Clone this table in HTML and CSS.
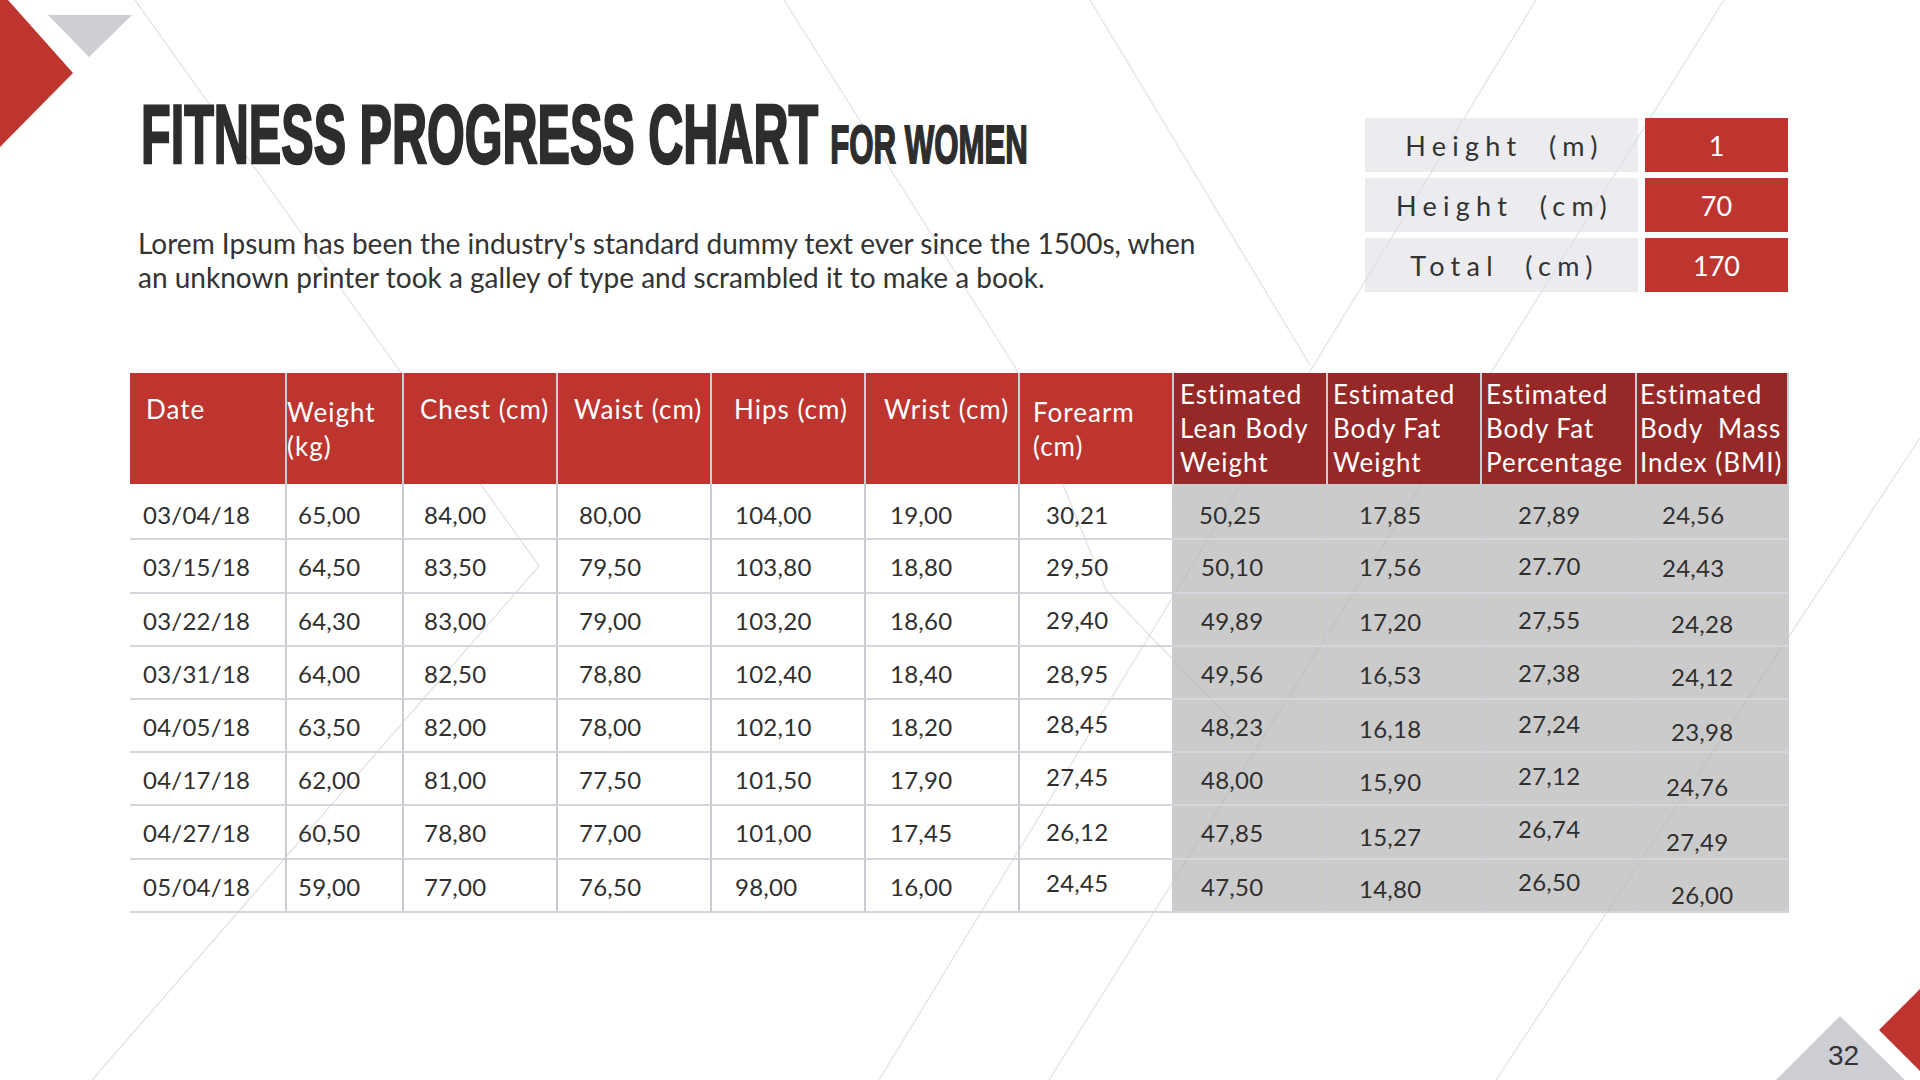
FILE: index.html
```html
<!DOCTYPE html>
<html lang="en">
<head>
<meta charset="utf-8">
<title>Fitness Progress Chart for Women</title>
<link rel="stylesheet" href="styles.css">
</head>
<body>
<div class="slide">
  <svg class="deco" width="1920" height="1080" viewBox="0 0 1920 1080" aria-hidden="true">
    <g class="bg-lines">
      <polyline points="135,0 539,566 92,1080"/>
      <polyline points="784,0 1015,367 1106,590 1253,743"/>
      <line x1="1090" y1="0" x2="1310" y2="365"/>
      <line x1="1536" y1="0" x2="879" y2="1080"/>
      <line x1="1724" y1="0" x2="1049" y2="1080"/>
      <line x1="1920" y1="438" x2="1496" y2="1080"/>
    </g>
    <polygon class="red" points="0,0 8,0 73,73 0,147"/>
    <polygon class="grey" points="48,15 132,15 89,57"/>
    <polygon class="grey" points="1776,1080 1840,1016 1905,1080"/>
    <polygon class="red" points="1920,989 1879,1030 1920,1071"/>
  </svg>
  <div class="page-num">32</div>

  <header class="top">
    <div class="intro">
      <h1 class="title">FITNESS PROGRESS CHART<span class="title-sub">FOR WOMEN</span></h1>
      <p class="lead">Lorem Ipsum has been the industry's standard dummy text ever since the 1500s, when<br>an unknown printer took a galley of type and scrambled it to make a book.</p>
    </div>
    <div class="stats">
      <div class="stat-label">Height  (m)</div><div class="stat-value">1</div>
      <div class="stat-label">Height  (cm)</div><div class="stat-value">70</div>
      <div class="stat-label">Total  (cm)</div><div class="stat-value">170</div>
    </div>
  </header>

  <div class="chart">
    <div class="row head">
      <div class="cell h1l">Date</div>
      <div class="cell h2l">Weight<br>(kg)</div>
      <div class="cell h1l">Chest (cm)</div>
      <div class="cell h1l">Waist (cm)</div>
      <div class="cell h1l">Hips (cm)</div>
      <div class="cell h1l">Wrist (cm)</div>
      <div class="cell h2l">Forearm<br>(cm)</div>
      <div class="cell h3l est">Estimated<br>Lean Body<br>Weight</div>
      <div class="cell h3l est">Estimated<br>Body Fat<br>Weight</div>
      <div class="cell h3l est">Estimated<br>Body Fat<br>Percentage</div>
      <div class="cell h3l est">Estimated<br>Body&nbsp; Mass<br>Index (BMI)</div>
    </div>
    <div class="row">
      <div class="cell">03/04/18</div><div class="cell">65,00</div><div class="cell">84,00</div><div class="cell">80,00</div><div class="cell">104,00</div><div class="cell">19,00</div><div class="cell">30,21</div><div class="cell est">50,25</div><div class="cell est">17,85</div><div class="cell est">27,89</div><div class="cell est">24,56</div>
    </div>
    <div class="row">
      <div class="cell">03/15/18</div><div class="cell">64,50</div><div class="cell">83,50</div><div class="cell">79,50</div><div class="cell">103,80</div><div class="cell">18,80</div><div class="cell">29,50</div><div class="cell est">50,10</div><div class="cell est">17,56</div><div class="cell est">27.70</div><div class="cell est">24,43</div>
    </div>
    <div class="row">
      <div class="cell">03/22/18</div><div class="cell">64,30</div><div class="cell">83,00</div><div class="cell">79,00</div><div class="cell">103,20</div><div class="cell">18,60</div><div class="cell">29,40</div><div class="cell est">49,89</div><div class="cell est">17,20</div><div class="cell est">27,55</div><div class="cell est">24,28</div>
    </div>
    <div class="row">
      <div class="cell">03/31/18</div><div class="cell">64,00</div><div class="cell">82,50</div><div class="cell">78,80</div><div class="cell">102,40</div><div class="cell">18,40</div><div class="cell">28,95</div><div class="cell est">49,56</div><div class="cell est">16,53</div><div class="cell est">27,38</div><div class="cell est">24,12</div>
    </div>
    <div class="row">
      <div class="cell">04/05/18</div><div class="cell">63,50</div><div class="cell">82,00</div><div class="cell">78,00</div><div class="cell">102,10</div><div class="cell">18,20</div><div class="cell">28,45</div><div class="cell est">48,23</div><div class="cell est">16,18</div><div class="cell est">27,24</div><div class="cell est">23,98</div>
    </div>
    <div class="row">
      <div class="cell">04/17/18</div><div class="cell">62,00</div><div class="cell">81,00</div><div class="cell">77,50</div><div class="cell">101,50</div><div class="cell">17,90</div><div class="cell">27,45</div><div class="cell est">48,00</div><div class="cell est">15,90</div><div class="cell est">27,12</div><div class="cell est">24,76</div>
    </div>
    <div class="row">
      <div class="cell">04/27/18</div><div class="cell">60,50</div><div class="cell">78,80</div><div class="cell">77,00</div><div class="cell">101,00</div><div class="cell">17,45</div><div class="cell">26,12</div><div class="cell est">47,85</div><div class="cell est">15,27</div><div class="cell est">26,74</div><div class="cell est">27,49</div>
    </div>
    <div class="row">
      <div class="cell">05/04/18</div><div class="cell">59,00</div><div class="cell">77,00</div><div class="cell">76,50</div><div class="cell">98,00</div><div class="cell">16,00</div><div class="cell">24,45</div><div class="cell est">47,50</div><div class="cell est">14,80</div><div class="cell est">26,50</div><div class="cell est">26,00</div>
    </div>
  </div>
</div>
</body>
</html>
```

FILE: styles.css
```css
* { box-sizing: border-box; }
html, body { margin: 0; padding: 0; }
body {
  width: 1920px;
  height: 1080px;
  overflow: hidden;
  background: #ffffff;
  font-family: Lato, "Liberation Sans", sans-serif;
  color: #303030;
}
.slide {
  position: relative;
  width: 1920px;
  height: 1080px;
  padding: 0 131px 0 130px;
}

/* decoration canvas */
.deco { position: absolute; left: 0; top: 0; z-index: 0; }
.bg-lines polyline, .bg-lines line { fill: none; stroke: #e3e3e6; stroke-width: 1.3; }
.deco .red { fill: #be3530; }
.deco .grey { fill: #cdcdd4; }
.page-num {
  position: absolute;
  left: 1828px;
  top: 1042px;
  z-index: 2;
  font-family: "Liberation Sans", Arial, sans-serif;
  font-size: 28px;
  line-height: 28px;
  color: #333333;
}

.top, .chart { position: relative; z-index: 1; }

/* header area */
.top {
  display: flex;
  justify-content: space-between;
  align-items: flex-start;
  height: 373px;
}
.intro { flex: 1 1 auto; min-width: 0; padding-left: 11px; }
.title {
  margin: 92px 0 0;
  font-family: "Liberation Sans", Arial, sans-serif;
  font-weight: 700;
  font-size: 84px;
  line-height: 84px;
  color: #2d2d2d;
  white-space: nowrap;
  -webkit-text-stroke: 2.5px #2d2d2d;
  transform: scaleX(0.578);
  transform-origin: 0 0;
}
.title-sub {
  font-size: 54px;
  line-height: 40px;
  margin-left: 21px;
  letter-spacing: 0;
  -webkit-text-stroke-width: 1.8px;
}
.lead {
  margin: 50px 0 0 -3px;
  font-size: 28px;
  line-height: 34px;
  color: #333333;
  white-space: nowrap;
}

.stats {
  flex: none;
  margin: 118px 1px 0 0;
  display: grid;
  grid-template-columns: 273px 143px;
  grid-auto-rows: 54px;
  column-gap: 7px;
  row-gap: 6px;
}
.stat-label {
  display: flex;
  align-items: center;
  justify-content: center;
  padding-left: 6px;
  background: rgba(222, 222, 230, 0.6);
  font-size: 27px;
  letter-spacing: 6.3px;
  white-space: pre;
  color: #333333;
}
.stat-value {
  display: flex;
  align-items: center;
  justify-content: center;
  background: #be3530;
  color: #ffffff;
  font-size: 27px;
}

/* data chart */
.chart {
  display: grid;
  width: 1659px;
  grid-template-columns: 155px 117px 154px 154px 154px 154px 154px 154px 154px 155px 154px;
  grid-template-rows: 111px 56px 54px 53px 53px 53px 53px 54px 53px;
}
.row { display: contents; }
.cell {
  display: flex;
  align-items: center;
  border-left: 2px solid #cbcbd4;
  border-bottom: 2px solid #d5d5dd;
  font-size: 24px;
  line-height: 28px;
  letter-spacing: 0.25px;
  color: #2f2f2f;
  white-space: nowrap;
  --dy: 1px;
  --px: 20px;
  padding-left: var(--px);
  padding-top: calc(12px + var(--dy));
  padding-bottom: calc(12px - var(--dy));
}
.cell:first-child { border-left: none; }
.cell:last-child { border-right: 2px solid #cbcbd4; }
.cell.est { background: rgba(178, 178, 178, 0.68); }

.head .cell {
  display: block;
  background: #be3530;
  color: #ffffff;
  font-size: 26px;
  line-height: 34px;
  letter-spacing: 1px;
  border-bottom: none;
  white-space: nowrap;
}
.head .cell.est { background: #962927; }
.head .h1l { padding-top: 19px; padding-bottom: 0; }
.head .h2l { padding-top: 22px; padding-bottom: 0; }
.head .h3l { padding-top: 4px; padding-bottom: 0; }

/* header text insets */
.head .cell:nth-child(1) { padding-left: 16px; }
.head .cell:nth-child(2) { padding-left: 0; }
.head .cell:nth-child(3) { padding-left: 16px; }
.head .cell:nth-child(4) { padding-left: 16px; }
.head .cell:nth-child(5) { padding-left: 22px; }
.head .cell:nth-child(6) { padding-left: 18px; }
.head .cell:nth-child(7) { padding-left: 13px; }
.head .cell:nth-child(8) { padding-left: 6px; }
.head .cell:nth-child(9) { padding-left: 5px; }
.head .cell:nth-child(10) { padding-left: 4px; }
.head .cell:nth-child(11) { padding-left: 3px; }

/* data text insets per column */
.row .cell:nth-child(1) { --px: 13px; }
.row .cell:nth-child(2) { --px: 11px; }
.row .cell:nth-child(3) { --px: 20px; }
.row .cell:nth-child(4) { --px: 21px; }
.row .cell:nth-child(5) { --px: 23px; }
.row .cell:nth-child(6) { --px: 24px; }
.row .cell:nth-child(7) { --px: 26px; }
.row .cell:nth-child(8) { --px: 27px; }
.row .cell:nth-child(9) { --px: 31px; }
.row .cell:nth-child(10) { --px: 36px; }
.row .cell:nth-child(11) { --px: 34px; }
.row:nth-child(2) .cell:nth-child(11),
.row:nth-child(3) .cell:nth-child(11) { --px: 25px; }
.row:nth-child(7) .cell:nth-child(11),
.row:nth-child(8) .cell:nth-child(11) { --px: 29px; }
.row:nth-child(2) .cell:nth-child(8) { --px: 25px; }

/* row baselines */
.row:nth-child(2) .cell { --dy: 4px; }

/* small vertical drifts of the original text boxes */
.row:nth-child(3) .cell:nth-child(10) { --dy: 0px; }
.row:nth-child(3) .cell:nth-child(11) { --dy: 2px; }
.row:nth-child(4) .cell:nth-child(7) { --dy: 0px; }
.row:nth-child(4) .cell:nth-child(9) { --dy: 2px; }
.row:nth-child(4) .cell:nth-child(10) { --dy: 0px; }
.row:nth-child(4) .cell:nth-child(11) { --dy: 4.5px; }
.row:nth-child(5) .cell:nth-child(9) { --dy: 2px; }
.row:nth-child(5) .cell:nth-child(10) { --dy: 0px; }
.row:nth-child(5) .cell:nth-child(11) { --dy: 4.5px; }
.row:nth-child(6) .cell:nth-child(7) { --dy: -1.5px; }
.row:nth-child(6) .cell:nth-child(9) { --dy: 3.5px; }
.row:nth-child(6) .cell:nth-child(10) { --dy: -1.5px; }
.row:nth-child(6) .cell:nth-child(11) { --dy: 6px; }
.row:nth-child(7) .cell:nth-child(7) { --dy: -1.5px; }
.row:nth-child(7) .cell:nth-child(9) { --dy: 3.5px; }
.row:nth-child(7) .cell:nth-child(10) { --dy: -2.7px; }
.row:nth-child(7) .cell:nth-child(11) { --dy: 8.3px; }
.row:nth-child(8) .cell:nth-child(7) { --dy: 0px; }
.row:nth-child(8) .cell:nth-child(9) { --dy: 4.7px; }
.row:nth-child(8) .cell:nth-child(10) { --dy: -2.7px; }
.row:nth-child(8) .cell:nth-child(11) { --dy: 9.6px; }
.row:nth-child(9) .cell:nth-child(7) { --dy: -2.7px; }
.row:nth-child(9) .cell:nth-child(9) { --dy: 3.5px; }
.row:nth-child(9) .cell:nth-child(10) { --dy: -3.9px; }
.row:nth-child(9) .cell:nth-child(11) { --dy: 9.6px; }
```
